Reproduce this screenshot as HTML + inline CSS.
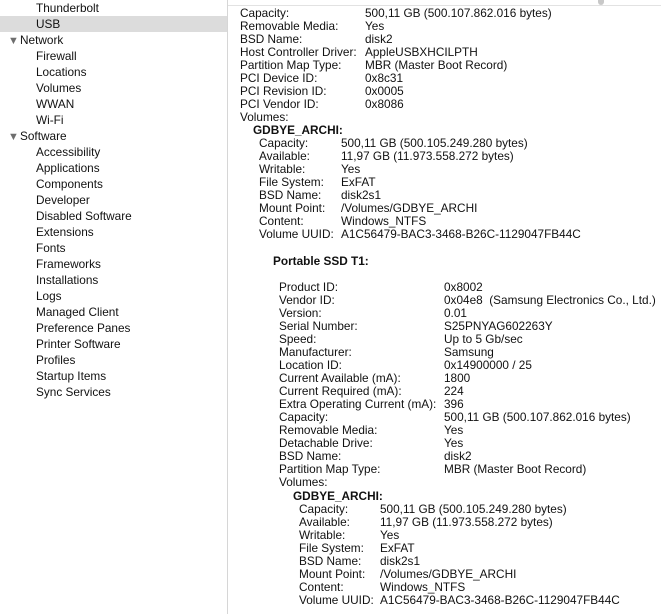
<!DOCTYPE html>
<html><head><meta charset="utf-8"><style>
body{margin:0;width:664px;height:614px;overflow:hidden;background:#fff;font-family:"Liberation Sans",Arial,sans-serif;font-size:11.8px;color:#111;position:relative}
.sb{position:absolute;left:0;top:0;width:227px;height:614px;background:#fff;border-right:1px solid #d6d6d6}
.s{position:absolute;height:16px;line-height:17px;white-space:nowrap}
.c{left:36px}
.p{left:8px}
.p b{font-weight:normal;font-size:11px;color:#6e6e6e;margin-right:1px;display:inline-block;width:11px}
.sel{position:absolute;left:0;top:16px;width:227px;height:16px;background:#dcdcdc}
.r{position:absolute;height:13px;line-height:15px;white-space:pre}
.h{font-weight:bold}
.topline{position:absolute;left:228px;top:5px;width:433px;height:1px;background:#e2e2e2}
.dot{position:absolute;left:598px;top:0;width:6px;height:5px;border-radius:0 0 3px 3px;background:#c8c8c8}
</style></head><body>
<div class="sb">
<div class="sel"></div>
<div class="s c" style="top:0">Thunderbolt</div>
<div class="s c" style="top:16px">USB</div>
<div class="s p" style="top:32px"><b>▼</b>Network</div>
<div class="s c" style="top:48px">Firewall</div>
<div class="s c" style="top:64px">Locations</div>
<div class="s c" style="top:80px">Volumes</div>
<div class="s c" style="top:96px">WWAN</div>
<div class="s c" style="top:112px">Wi-Fi</div>
<div class="s p" style="top:128px"><b>▼</b>Software</div>
<div class="s c" style="top:144px">Accessibility</div>
<div class="s c" style="top:160px">Applications</div>
<div class="s c" style="top:176px">Components</div>
<div class="s c" style="top:192px">Developer</div>
<div class="s c" style="top:208px">Disabled Software</div>
<div class="s c" style="top:224px">Extensions</div>
<div class="s c" style="top:240px">Fonts</div>
<div class="s c" style="top:256px">Frameworks</div>
<div class="s c" style="top:272px">Installations</div>
<div class="s c" style="top:288px">Logs</div>
<div class="s c" style="top:304px">Managed Client</div>
<div class="s c" style="top:320px">Preference Panes</div>
<div class="s c" style="top:336px">Printer Software</div>
<div class="s c" style="top:352px">Profiles</div>
<div class="s c" style="top:368px">Startup Items</div>
<div class="s c" style="top:384px">Sync Services</div>
</div>
<div class="topline"></div><div class="dot"></div>

<div class="r" style="left:240px;top:6px">Capacity:</div><div class="r" style="left:365px;top:6px">500,11 GB (500.107.862.016 bytes)</div>
<div class="r" style="left:240px;top:19px">Removable Media:</div><div class="r" style="left:365px;top:19px">Yes</div>
<div class="r" style="left:240px;top:32px">BSD Name:</div><div class="r" style="left:365px;top:32px">disk2</div>
<div class="r" style="left:240px;top:45px">Host Controller Driver:</div><div class="r" style="left:365px;top:45px">AppleUSBXHCILPTH</div>
<div class="r" style="left:240px;top:58px">Partition Map Type:</div><div class="r" style="left:365px;top:58px">MBR (Master Boot Record)</div>
<div class="r" style="left:240px;top:71px">PCI Device ID:</div><div class="r" style="left:365px;top:71px">0x8c31</div>
<div class="r" style="left:240px;top:84px">PCI Revision ID:</div><div class="r" style="left:365px;top:84px">0x0005</div>
<div class="r" style="left:240px;top:97px">PCI Vendor ID:</div><div class="r" style="left:365px;top:97px">0x8086</div>
<div class="r" style="left:240px;top:110px">Volumes:</div>
<div class="r h" style="left:253px;top:123px">GDBYE_ARCHI:</div>
<div class="r" style="left:259px;top:136px">Capacity:</div><div class="r" style="left:341px;top:136px">500,11 GB (500.105.249.280 bytes)</div>
<div class="r" style="left:259px;top:149px">Available:</div><div class="r" style="left:341px;top:149px">11,97 GB (11.973.558.272 bytes)</div>
<div class="r" style="left:259px;top:162px">Writable:</div><div class="r" style="left:341px;top:162px">Yes</div>
<div class="r" style="left:259px;top:175px">File System:</div><div class="r" style="left:341px;top:175px">ExFAT</div>
<div class="r" style="left:259px;top:188px">BSD Name:</div><div class="r" style="left:341px;top:188px">disk2s1</div>
<div class="r" style="left:259px;top:201px">Mount Point:</div><div class="r" style="left:341px;top:201px">/Volumes/GDBYE_ARCHI</div>
<div class="r" style="left:259px;top:214px">Content:</div><div class="r" style="left:341px;top:214px">Windows_NTFS</div>
<div class="r" style="left:259px;top:227px">Volume UUID:</div><div class="r" style="left:341px;top:227px">A1C56479-BAC3-3468-B26C-1129047FB44C</div>

<div class="r h" style="left:273px;top:254px">Portable SSD T1:</div>
<div class="r" style="left:279px;top:280px">Product ID:</div><div class="r" style="left:444px;top:280px">0x8002</div>
<div class="r" style="left:279px;top:293px">Vendor ID:</div><div class="r" style="left:444px;top:293px">0x04e8  (Samsung Electronics Co., Ltd.)</div>
<div class="r" style="left:279px;top:306px">Version:</div><div class="r" style="left:444px;top:306px">0.01</div>
<div class="r" style="left:279px;top:319px">Serial Number:</div><div class="r" style="left:444px;top:319px">S25PNYAG602263Y</div>
<div class="r" style="left:279px;top:332px">Speed:</div><div class="r" style="left:444px;top:332px">Up to 5 Gb/sec</div>
<div class="r" style="left:279px;top:345px">Manufacturer:</div><div class="r" style="left:444px;top:345px">Samsung</div>
<div class="r" style="left:279px;top:358px">Location ID:</div><div class="r" style="left:444px;top:358px">0x14900000 / 25</div>
<div class="r" style="left:279px;top:371px">Current Available (mA):</div><div class="r" style="left:444px;top:371px">1800</div>
<div class="r" style="left:279px;top:384px">Current Required (mA):</div><div class="r" style="left:444px;top:384px">224</div>
<div class="r" style="left:279px;top:397px">Extra Operating Current (mA):</div><div class="r" style="left:444px;top:397px">396</div>
<div class="r" style="left:279px;top:410px">Capacity:</div><div class="r" style="left:444px;top:410px">500,11 GB (500.107.862.016 bytes)</div>
<div class="r" style="left:279px;top:423px">Removable Media:</div><div class="r" style="left:444px;top:423px">Yes</div>
<div class="r" style="left:279px;top:436px">Detachable Drive:</div><div class="r" style="left:444px;top:436px">Yes</div>
<div class="r" style="left:279px;top:449px">BSD Name:</div><div class="r" style="left:444px;top:449px">disk2</div>
<div class="r" style="left:279px;top:462px">Partition Map Type:</div><div class="r" style="left:444px;top:462px">MBR (Master Boot Record)</div>
<div class="r" style="left:279px;top:475px">Volumes:</div>
<div class="r h" style="left:293px;top:489px">GDBYE_ARCHI:</div>
<div class="r" style="left:299px;top:502px">Capacity:</div><div class="r" style="left:380px;top:502px">500,11 GB (500.105.249.280 bytes)</div>
<div class="r" style="left:299px;top:515px">Available:</div><div class="r" style="left:380px;top:515px">11,97 GB (11.973.558.272 bytes)</div>
<div class="r" style="left:299px;top:528px">Writable:</div><div class="r" style="left:380px;top:528px">Yes</div>
<div class="r" style="left:299px;top:541px">File System:</div><div class="r" style="left:380px;top:541px">ExFAT</div>
<div class="r" style="left:299px;top:554px">BSD Name:</div><div class="r" style="left:380px;top:554px">disk2s1</div>
<div class="r" style="left:299px;top:567px">Mount Point:</div><div class="r" style="left:380px;top:567px">/Volumes/GDBYE_ARCHI</div>
<div class="r" style="left:299px;top:580px">Content:</div><div class="r" style="left:380px;top:580px">Windows_NTFS</div>
<div class="r" style="left:299px;top:593px">Volume UUID:</div><div class="r" style="left:380px;top:593px">A1C56479-BAC3-3468-B26C-1129047FB44C</div>
</body></html>
